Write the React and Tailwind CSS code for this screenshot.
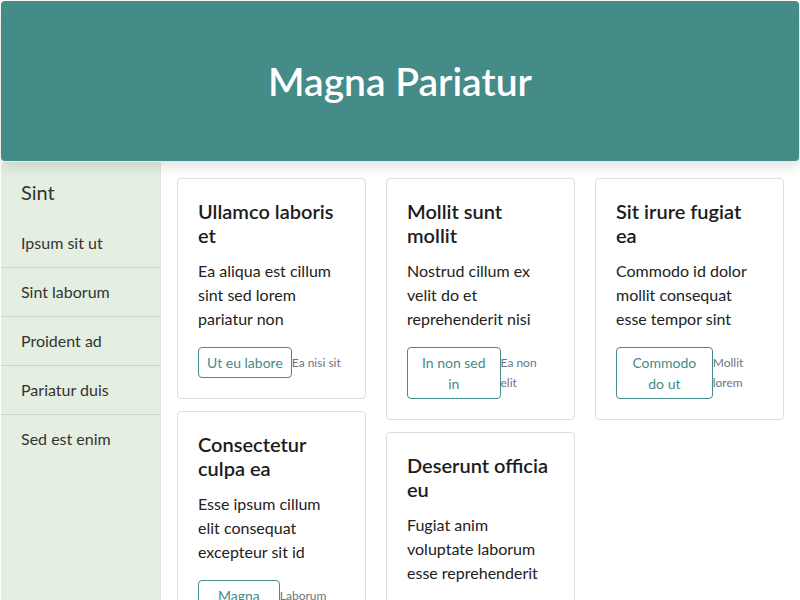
import React from 'react';

const navItems = ['Ipsum sit ut', 'Sint laborum', 'Proident ad', 'Pariatur duis', 'Sed est enim'];

const columns = [
  [
    {
      title: 'Ullamco laboris et',
      body: 'Ea aliqua est cillum sint sed lorem pariatur non',
      action: 'Ut eu labore',
      note: 'Ea nisi sit',
    },
    {
      title: 'Consectetur culpa ea',
      body: 'Esse ipsum cillum elit consequat excepteur sit id',
      action: 'Magna velit',
      note: 'Laborum esse',
    },
  ],
  [
    {
      title: 'Mollit sunt mollit',
      body: 'Nostrud cillum ex velit do et reprehenderit nisi',
      action: 'In non sed in',
      note: 'Ea non elit',
    },
    {
      title: 'Deserunt officia eu',
      body: 'Fugiat anim voluptate laborum esse reprehenderit',
      action: 'Aute est',
      note: 'Sint',
    },
  ],
  [
    {
      title: 'Sit irure fugiat ea',
      body: 'Commodo id dolor mollit consequat esse tempor sint',
      action: 'Commodo do ut',
      note: 'Mollit lorem',
    },
  ],
];

function Card({ title, body, action, note }) {
  return (
    <div className="rounded border border-[#dedede] bg-white p-5">
      <h2 className="text-xl font-semibold leading-6 text-[#1c1c1c]">{title}</h2>
      <p className="mt-3 text-base leading-6 text-[#222]">{body}</p>
      <div className="mt-4 flex items-center">
        <button className="rounded border border-[#458b87] px-2 py-1 text-sm leading-[21px] text-[#458b87]">
          {action}
        </button>
        <span className="text-xs leading-5 text-[#6c757d]">{note}</span>
      </div>
    </div>
  );
}

export default function App() {
  return (
    <div className="h-[600px] overflow-hidden bg-white pl-px pt-px font-['Lato','Open_Sans',sans-serif]">
      <header className="relative z-10 mr-px flex h-[160px] items-center justify-center rounded bg-[#458b87] shadow-[0_5px_14px_rgba(0,0,0,0.13)]">
        <h1 className="text-[39px] font-semibold text-white">Magna Pariatur</h1>
      </header>
      <div className="mt-px flex h-[440px]">
        <aside className="w-[160px] shrink-0 rounded-tl border-r border-[#dde6da] bg-[#e4efe1]">
          <div className="px-5 pb-[13px] pt-4 text-xl leading-7 text-[#333]">Sint</div>
          {navItems.map((item, i) => (
            <div
              key={item}
              className={
                i < navItems.length - 1
                  ? 'border-b border-[#c9d6c6] px-5 py-3 text-base leading-6 text-[#333]'
                  : 'px-5 py-3 text-base leading-6 text-[#333]'
              }
            >
              {item}
            </div>
          ))}
        </aside>
        <main className="flex flex-1 items-start gap-5 p-4">
          {columns.map((col, i) => (
            <div key={i} className="flex flex-1 flex-col gap-3">
              {col.map((card) => (
                <Card key={card.title} {...card} />
              ))}
            </div>
          ))}
        </main>
      </div>
    </div>
  );
}
